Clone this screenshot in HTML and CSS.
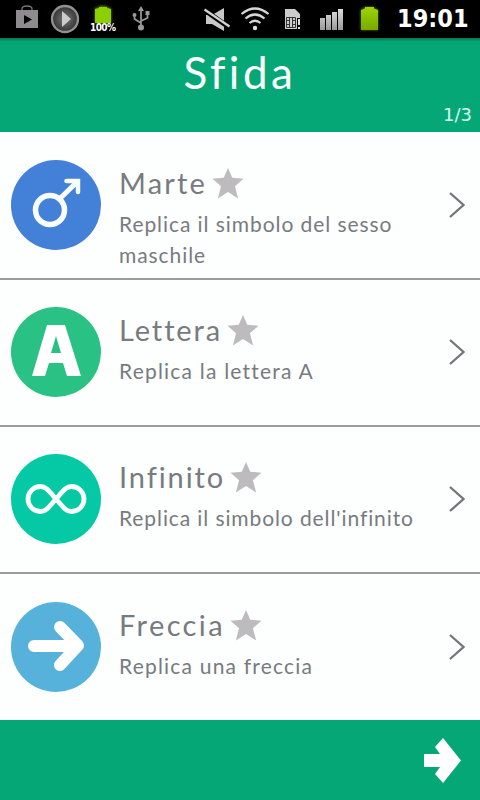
FILE: index.html
```html
<!DOCTYPE html>
<html lang="it">
<head>
<meta charset="utf-8">
<title>Sfida</title>
<link rel="stylesheet" href="styles.css">
</head>
<body>
<div class="status">
  <svg class="tray" width="390" height="38" viewBox="0 0 390 38">
    <defs>
      <radialGradient id="disc"><stop offset="0" stop-color="#777"/><stop offset="1" stop-color="#333"/></radialGradient>
      <linearGradient id="bars" x2="0" y2="1"><stop offset="0" stop-color="#ddd"/><stop offset="1" stop-color="#999"/></linearGradient>
      <linearGradient id="cell" x2="0" y2="1"><stop offset="0" stop-color="#9bd600"/><stop offset="1" stop-color="#78a800"/></linearGradient>
      <filter id="glow" x="-50%" y="-50%" width="200%" height="200%"><feGaussianBlur stdDeviation="1.8"/></filter>
    </defs>
    <path d="M22 11V9q0-3 5-3t5 3v2" fill="none" stroke="#777" stroke-width="1.3"/>
    <path d="M16 10h22v18H16z" fill="#8d8b8d"/><path d="M24 15l8 4.500-8 4.500z" fill="#000"/>
    <circle cx="65" cy="19" r="13" fill="url(#disc)" stroke="#929292" stroke-width="2.300"/>
    <path d="M62 11l9 8-9 8z" fill="#ccc"/>
    <path d="M95 8h4V6h8v2h4v15H95z" fill="#8bd000" filter="url(#glow)" opacity=".7"/>
    <path d="M95 9l4-1V7h8v1l4 1v14H95z" fill="#8bd000"/>
    <text class="percent" x="90" y="31" textLength="26">100%</text>
    <g fill="none" stroke="#999" stroke-width="1.700"><path d="M141 9v18M134.500 15v4l6.500 4M147.500 13v5l-6.500 3"/></g>
    <g fill="#999"><path d="M138 11l3-5 3 5z"/><circle cx="134.500" cy="15" r="2"/><path d="M145.500 11h4v4h-4z"/><circle cx="141" cy="27.500" r="3"/></g>
    <path d="M206 15h6l12-7v23l-12-7h-6z" fill="#c8c8c8"/>
    <path d="M203 9l27 19" stroke="#000" stroke-width="5"/><path d="M204.500 9.500l25 17" stroke="#d2d2d2" stroke-width="2.200"/>
    <g fill="none" stroke="#d6d6d6" stroke-width="2.200"><path d="M241.500 14q13.500-11 27 0"/><path d="M245.500 18.500q9.500-8 19 0"/><path d="M249.500 23q5.500-4.500 11 0"/></g><circle cx="255" cy="28" r="2.200" fill="#ddd"/>
    <path d="M285 9h10l5 5v15h-15z" fill="#ccc"/>
    <path d="M286.500 17.500h9v10h-9zM289.500 17v10M292.500 17v10M286 20.500h3M293 20.500h3M286 24.500h3M293 24.500h3" fill="none" stroke="#333" stroke-width="1"/>
    <path d="M297 18h4v12h-4z" fill="#000"/><path d="M298 19h2v6h-2zM298 27h2v2h-2z" fill="#ddd"/>
    <path d="M320 18h5v12h-5zM326 15h5v15h-5zM332 12h5v18h-5zM338 9h5v21h-5z" fill="url(#bars)"/>
    <path d="M361 9h3V7h10v2h4v21h-17z" fill="#88be00" filter="url(#glow)" opacity=".65"/>
    <path d="M361 10l4-1.500V7h9v1.500l4 1.500v20h-17z" fill="url(#cell)"/>
  </svg>
  <span class="clock">19:01</span>
</div>
<header class="header">
  <h1 class="heading">Sfida</h1>
  <span class="page">1/3</span>
</header>
<main>
  <section class="row first">
    <svg class="badge" viewBox="0 0 90 90"><circle cx="45" cy="45" r="45" fill="#4380d8"/><g fill="none" stroke="#fafeff"><circle cx="39" cy="50" r="14.500" stroke-width="5.500"/><path d="M49 38.500L66 22" stroke-width="5"/><path d="M55.500 21H67V32" stroke-width="4.500" stroke-linecap="round"/></g></svg>
    <div class="copy"><h2 class="name"><span class="marte">Marte</span><svg class="star" viewBox="0 0 30 30"><path d="M15 1l4 9 10.500 1-8 7 3 11.500-9.500-6-9.500 6 3-11.500-8-7L11 10z"/></svg></h2><p class="desc d1">Replica il simbolo del sesso<br>maschile</p></div>
    <svg class="chevron" viewBox="0 0 16 26"><path d="M1 1l13.500 12L1 25"/></svg>
  </section>
  <section class="row">
    <svg class="badge" viewBox="0 0 90 90"><circle cx="45" cy="45" r="45" fill="#29c184"/><path fill="#fff" fill-rule="evenodd" d="M36 18H54L70 69H56L52 56H38L34 69H21ZM45 29L40 46H50Z"/></svg>
    <div class="copy"><h2 class="name"><span class="lettera">Lettera</span><svg class="star" viewBox="0 0 30 30"><path d="M15 1l4 9 10.500 1-8 7 3 11.500-9.500-6-9.500 6 3-11.500-8-7L11 10z"/></svg></h2><p class="desc d2">Replica la lettera A</p></div>
    <svg class="chevron" viewBox="0 0 16 26"><path d="M1 1l13.500 12L1 25"/></svg>
  </section>
  <section class="row">
    <svg class="badge" viewBox="0 0 90 90"><circle cx="45" cy="45" r="45" fill="#05c9a5"/><path d="M45 45C38 37 35 32.500 29.500 32.500a12.500 12.500 0 0 0 0 25C35 57.500 38 53 45 45S55 32.500 60.500 32.500a12.500 12.500 0 0 1 0 25C55 57.500 52 53 45 45z" fill="none" stroke="#fafffe" stroke-width="4.800"/></svg>
    <div class="copy"><h2 class="name"><span class="infinito">Infinito</span><svg class="star" viewBox="0 0 30 30"><path d="M15 1l4 9 10.500 1-8 7 3 11.500-9.500-6-9.500 6 3-11.500-8-7L11 10z"/></svg></h2><p class="desc d3">Replica il simbolo dell'infinito</p></div>
    <svg class="chevron" viewBox="0 0 16 26"><path d="M1 1l13.500 12L1 25"/></svg>
  </section>
  <section class="row last">
    <svg class="badge" viewBox="0 0 90 90"><circle cx="45" cy="45" r="45" fill="#56b2da"/><path d="M23 44H65M49 25L67 43.500 49 63" fill="none" stroke="#fff" stroke-width="12" stroke-linecap="round" stroke-linejoin="round"/></svg>
    <div class="copy"><h2 class="name"><span class="freccia">Freccia</span><svg class="star" viewBox="0 0 30 30"><path d="M15 1l4 9 10.500 1-8 7 3 11.500-9.500-6-9.500 6 3-11.500-8-7L11 10z"/></svg></h2><p class="desc d4">Replica una freccia</p></div>
    <svg class="chevron" viewBox="0 0 16 26"><path d="M1 1l13.500 12L1 25"/></svg>
  </section>
</main>
<footer class="footer"><svg width="38" height="46" viewBox="0 0 38 46"><path d="M0 17h16l-5-7 8-9 18 22.500L19 46l-8-9 5-7H0z" fill="#fff"/></svg></footer>
</body>
</html>
```
FILE: styles.css
```css
* { box-sizing: border-box; }
body { margin: 0; width: 480px; height: 800px; overflow: hidden; display: flex; flex-direction: column; background: #fdfefe; font-family: Lato, "Liberation Sans", sans-serif; color: #777b80; }
h1, h2, p { margin: 0; font-weight: 400; }
.status { height: 38px; flex: none; display: flex; background: #000; }
.tray { flex: none; }
.percent { font: bold 10px "DejaVu Sans Condensed", "DejaVu Sans", sans-serif; fill: #fff; }
.clock { padding-left: 7px; color: #fff; font: bold 25px/38px "DejaVu Sans Condensed", "DejaVu Sans", sans-serif; white-space: nowrap; }
.header { height: 94px; flex: none; display: flex; flex-direction: column; justify-content: space-between; background: linear-gradient(#087552, #06a777 4px); color: #fbfffe; }
.heading { text-align: center; font-size: 44px; line-height: 68px; letter-spacing: 3.5px; }
.page { align-self: flex-end; padding-right: 8px; font: 18px/24px "DejaVu Sans", sans-serif; padding-bottom: 5px; margin-top: -5px; color: #d5fff0; }
main { flex: none; height: 588px; }
.row { height: 147px; display: flex; align-items: flex-start; padding: 27px 15px 0 11px; border-bottom: 2px solid #999d9e; }
.row.first { height: 148px; padding-top: 28px; }
.row.last { height: 146px; padding-top: 28px; border-bottom: 0; }
.badge { width: 90px; height: 90px; flex: none; }
.copy { flex: 1; padding-left: 18px; white-space: nowrap; }
.name { display: flex; align-items: center; gap: 5px; height: 46px; font-size: 29px; line-height: 46px; }
.star { width: 32px; height: 32px; flex: none; fill: #bdbbbd; }
.desc { font-size: 21px; line-height: 31px; margin-top: 2px; }
.marte { letter-spacing: 2.2px; }
.lettera { letter-spacing: 1.9px; }
.infinito { letter-spacing: 1.9px; }
.freccia { letter-spacing: 2.400px; }
.d1 { letter-spacing: .93px; }
.d2 { letter-spacing: 1.2px; }
.d3 { letter-spacing: .9px; }
.d4 { letter-spacing: 1.2px; }
.chevron { width: 16px; height: 26px; flex: none; margin-top: 32px; fill: none; stroke: #73757a; stroke-width: 2.3; }
.footer { height: 80px; flex: none; display: flex; align-items: center; justify-content: flex-end; padding-right: 18px; background: #06a777; }
```
